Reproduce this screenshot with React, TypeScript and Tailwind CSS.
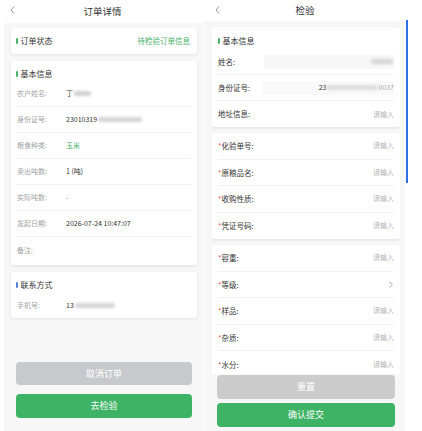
import type { ReactNode } from 'react'

const font = { fontFamily: '"Noto Sans CJK SC", "Noto Sans", sans-serif' }

function Blur({ w, className = 'bg-[#d2d2d2]' }: { w: number; className?: string }) {
  return <span className={`inline-block h-[5px] rounded-full blur-[1.5px] ${className}`} style={{ width: w }} />
}

function Header({ title, h }: { title: string; h: string }) {
  return (
    <div className={`relative flex shrink-0 items-center justify-center bg-white ${h}`}>
      <svg className="absolute left-[10px] top-[6px]" width="5" height="8" viewBox="0 0 5 8" fill="none">
        <polyline points="4,0.5 1,4 4,7.5" stroke="#8a8a8a" strokeWidth="0.9" />
      </svg>
      <span className="text-[9.5px] leading-none text-[#333]">{title}</span>
    </div>
  )
}

function CardTitle({ children, mark = 'bg-[#4cb26a]' }: { children: ReactNode; mark?: string }) {
  return (
    <div className="flex h-[14px] items-center gap-[3px] text-[8px] leading-none text-[#333]">
      <span className={`h-[6px] w-[1.5px] rounded-full ${mark}`} />
      {children}
    </div>
  )
}

function InfoRow({ label, children, last }: { label: string; children?: ReactNode; last?: boolean }) {
  return (
    <div className={`flex h-[26px] items-center text-[7px] leading-none ${last ? '' : 'border-b border-[#f2f2f2]'}`}>
      <span className="w-[49px] text-[#a3a3a3]">{label}</span>
      <span className="flex items-center text-[#333]">{children}</span>
    </div>
  )
}

function FormRow({ label, required = true, last, h = 'h-[26.5px]', children }: { label: string; required?: boolean; last?: boolean; h?: string; children?: ReactNode }) {
  return (
    <div className={`flex items-center justify-between text-[7.5px] leading-none ${h} ${last ? '' : 'border-b border-[#f2f2f2]'}`}>
      <span className="text-[#333]">
        {required && <span className="text-[#e85454]">*</span>}
        {label}
      </span>
      {children ?? <span className="text-[7px] text-[#b3b3b3]">请输入</span>}
    </div>
  )
}

const card = 'rounded-[3px] bg-white shadow-[0_1px_3px_rgba(0,0,0,0.09)]'

function OrderDetail() {
  return (
    <div className="flex h-full w-[205px] shrink-0 flex-col bg-white">
      <Header title="订单详情" h="h-[23px]" />
      <div className="ml-[4px] mr-[1px] flex min-h-0 flex-1 flex-col bg-[#f7f7f7] px-[7px] pt-[5px]">
        <div className={`${card} flex h-[26px] items-center justify-between pl-[5px] pr-[7px]`}>
          <CardTitle>订单状态</CardTitle>
          <span className="text-[7.5px] leading-none text-[#4cb26a]">待检验订单信息</span>
        </div>

        <div className={`${card} mt-[7px] px-[6px] pb-[2px] pt-[6px]`}>
          <div className="-ml-[1px]">
            <CardTitle>基本信息</CardTitle>
          </div>
          <InfoRow label="农户姓名:">
            丁<Blur w={17} className="ml-[1px] bg-[#d0d0d0]" />
          </InfoRow>
          <InfoRow label="身份证号:">
            23010319<Blur w={44} className="ml-[1px] bg-[#d4d4d4]" />
          </InfoRow>
          <InfoRow label="粮食种类:">
            <span className="text-[#4cb26a]">玉米</span>
          </InfoRow>
          <InfoRow label="卖出吨数:">1 (吨)</InfoRow>
          <InfoRow label="实际吨数:">
            <span className="text-[#4cb26a]">-</span>
          </InfoRow>
          <InfoRow label="发起日期:">2026-07-24 10:47:07</InfoRow>
          <InfoRow label="备注:" last />
        </div>

        <div className={`${card} mt-[7px] px-[6px] pt-[6px]`}>
          <div className="-ml-[1px]">
            <CardTitle mark="bg-[#5b7fd6]">联系方式</CardTitle>
          </div>
          <InfoRow label="手机号:" last>
            13<Blur w={40} className="ml-[1px] bg-[#d4d4d4]" />
          </InfoRow>
        </div>

        <div className="flex-1" />
        <div className="flex flex-col gap-[9px] px-[5px] pb-[13px]">
          <button className="h-[23px] rounded-[4px] bg-[#c8c9cc] text-[9px] text-white">取消订单</button>
          <button className="h-[24px] rounded-[4px] bg-[#3eb265] text-[9px] text-white">去检验</button>
        </div>
      </div>
    </div>
  )
}

function Inspection() {
  return (
    <div className="flex h-full flex-1 bg-white">
      <div className="flex w-[200px] shrink-0 flex-col">
        <Header title="检验" h="h-[21px]" />
        <div className="flex min-h-0 flex-1 flex-col bg-[#f7f7f7] pl-[7px] pr-[5px]">
          <div className="min-h-0 flex-1 overflow-hidden pt-[6px]">
            <div className={`${card} px-[6px] pt-[7px]`}>
              <div className="h-[15px]">
                <CardTitle>基本信息</CardTitle>
              </div>
              <FormRow label="姓名:" required={false} h="h-[26px]">
                <span className="flex h-[14px] w-[130px] items-center justify-end bg-[#f7f7f7] pr-[1px]">
                  <Blur w={22} className="bg-[#d4d4d4]" />
                </span>
              </FormRow>
              <FormRow label="身份证号:" required={false} h="h-[26px]">
                <span className="flex h-[14px] w-[131px] items-center justify-end bg-[#f9f9f9] text-[7px] text-[#333]">
                  23<Blur w={52} className="bg-[#dcdcdc]" />
                  <span className="text-[#aaa] blur-[0.6px]">0037</span>
                </span>
              </FormRow>
              <FormRow label="地址信息:" required={false} h="h-[26px]" last />
            </div>

            <div className={`${card} mt-[6px] px-[6px]`}>
              <FormRow label="化验单号:" />
              <FormRow label="原粮品名:" />
              <FormRow label="收购性质:" />
              <FormRow label="凭证号码:" last />
            </div>

            <div className={`${card} mt-[6px] px-[6px]`}>
              <FormRow label="容重:" />
              <FormRow label="等级:">
                <svg width="4" height="7" viewBox="0 0 4 7" fill="none" className="mr-[1px]">
                  <polyline points="0.5,0.5 3.3,3.5 0.5,6.5" stroke="#999" strokeWidth="0.8" />
                </svg>
              </FormRow>
              <FormRow label="样品:" />
              <FormRow label="杂质:" />
              <FormRow label="水分:" last />
            </div>
          </div>
          <div className="flex flex-col gap-[4px] pb-[4px] pl-[5px] pr-[5px] pt-[1px]">
            <button className="h-[24px] rounded-[4px] bg-[#cccccc] text-[9px] text-white">重置</button>
            <button className="h-[24px] rounded-[4px] bg-[#3eb265] text-[9px] text-white">确认提交</button>
          </div>
        </div>
      </div>
      <div className="ml-[1px] mt-[20px] h-[163px] w-[1.5px] bg-[#2f6fe8]" />
    </div>
  )
}

export default function App() {
  return (
    <div className="flex h-[431px] w-[422px] overflow-hidden bg-white" style={font}>
      <OrderDetail />
      <Inspection />
    </div>
  )
}
